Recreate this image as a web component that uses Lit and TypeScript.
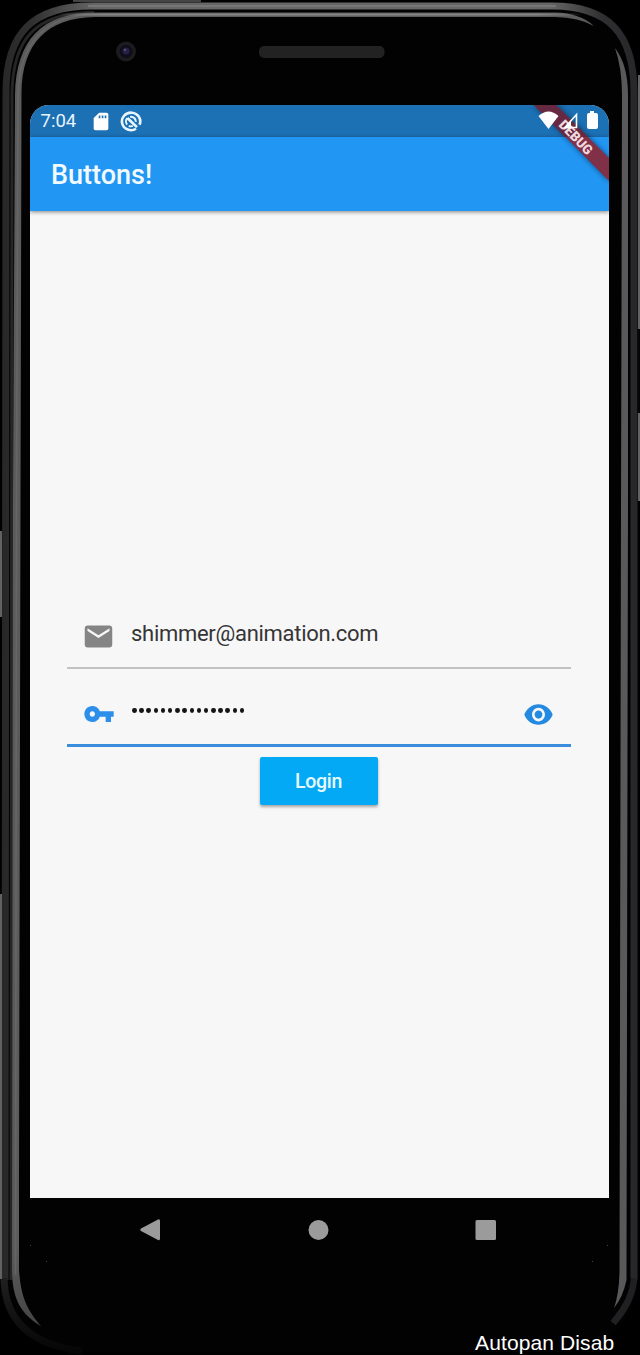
import { LitElement, html, css, svg } from "lit";
import { customElement, property, state } from "lit/decorators.js";

@customElement("phone-bezel")
class PhoneBezel extends LitElement {
  static styles = css`
    :host { display: block; }
    svg { display: block; }
  `;
  render() {
    const outer = "M2 1280 V92 C2 30 30 2 92 2 H552 C612 2 638 30 638 92 V1280 C636 1318 608 1350 568 1352 H80 C34 1350 0 1318 0 1280Z";
    return html`<svg width="640" height="1355" viewBox="0 0 640 1355" aria-hidden="true">
      <defs>
        <linearGradient id="rim" x1="0" x2="640" y1="0" y2="0" gradientUnits="userSpaceOnUse">
          <stop offset="0" stop-color="#272727"/><stop offset=".05" stop-color="#303030"/><stop offset=".15" stop-color="#666"/>
          <stop offset=".86" stop-color="#666"/><stop offset=".94" stop-color="#303032"/><stop offset="1" stop-color="#262628"/>
        </linearGradient>
        <linearGradient id="shine" x1="0" x2="640" y1="0" y2="0" gradientUnits="userSpaceOnUse">
          <stop offset="0" stop-color="#888" stop-opacity="0"/><stop offset=".09" stop-color="#888" stop-opacity="0"/><stop offset=".16" stop-color="#858585"/>
          <stop offset=".84" stop-color="#858585"/><stop offset=".91" stop-color="#888" stop-opacity="0"/>
        </linearGradient>
        <linearGradient id="fade" x1="0" x2="0" y1="1265" y2="1350" gradientUnits="userSpaceOnUse">
          <stop offset="0" stop-color="#242424"/><stop offset="1" stop-color="#060606"/>
        </linearGradient>
        <linearGradient id="tail" x1="0" x2="0" y1="1250" y2="1328" gradientUnits="userSpaceOnUse">
          <stop offset="0" stop-color="#5b5b5b"/><stop offset="1" stop-color="#444"/>
        </linearGradient>
      </defs>
      <rect width="640" height="1355" fill="#000"/>
      <rect x="73" y="0" width="128" height="2" fill="#444"/>
      <path d=${outer} fill="#020202"/>
      <path d="M5 1280 L6 92 C6 33 33 6 92 6 H552 C608 6 634 33 634 92 V1280" fill="none" stroke="url(#rim)" stroke-width="7"/>
      <path d="M88 6 H556" stroke="#7c7c7c" stroke-width="1.6"/>
      <path d="M4 1278 Q5 1342 82 1351" fill="none" stroke="url(#fade)" stroke-width="7"/>
      <path d="M634 1278 Q632 1302 613 1323" fill="none" stroke="#202022" stroke-width="7"/>
      <path d="M630.5 1278 Q629 1300 611 1318" fill="none" stroke="#050505" stroke-width="1"/>
      <path d="M11 1280 L12 93 C13 37 37 12.500 94 12.500" fill="none" stroke="#262626" stroke-width="3"/>
      <path d="M12 1270 L13 500 L15 95 C16 40 42 12.500 95 12.500 H555 Q580 13 594 26 Q579 17.500 555 17 H95 C47 18 22 43 21.500 93 L20.500 500 L19 1180 V1270 C21 1300 29 1312 41 1326 C22 1315 12 1300 12 1270Z" fill="url(#tail)"/>
      <path d="M15.500 1275 L16.500 500 L18 95 C19 43 45 14.500 96 14.500" fill="none" stroke="#666" stroke-width="1.600"/>
      <path d="M50 14.500 H582" stroke="url(#shine)" stroke-width="2"/>
      <path d="M615 48 Q628 65 628 95 V500 L626.500 1280 Q623 1297 614 1308 Q619 1294 619.500 1272 L621 500 L622 95 Q622 68 615 48Z" fill="#59595b"/>
      <g fill="#626263"><rect x="0" y="531" width="2" height="86"/><rect x="0" y="894" width="2" height="385"/><rect x="638" y="75" width="2" height="254"/><rect x="638" y="413" width="2" height="88"/></g>
      <rect x="637.500" y="329" width="2.500" height="84" fill="#050505"/>
      <circle cx="126" cy="51.500" r="10" fill="#1c1c1e"/><circle cx="126" cy="51.500" r="6.500" fill="#100d1b"/><circle cx="126" cy="51" r="3.500" fill="#272044"/><circle cx="125" cy="50" r="1.300" fill="#504a69"/>
      <rect x="259" y="46" width="125.500" height="12" rx="5" fill="#222"/>
      <g fill="#444"><rect x="30" y="1245" width="1" height="1"/><rect x="46" y="1261" width="1" height="1"/><rect x="607" y="1245" width="1" height="1"/><rect x="592" y="1261" width="1" height="1"/></g>
    </svg>`;
  }
}

const glyphs: Record<string, unknown> = {
  mail: svg`<path d="M20 4H4c-1.1 0-2 .9-2 2v12c0 1.1.9 2 2 2h16c1.1 0 2-.9 2-2V6c0-1.1-.9-2-2-2zm0 4l-8 5-8-5V6l8 5 8-5v2z"/>`,
  key: svg`<path d="M12.65 10C11.83 7.67 9.61 6 7 6c-3.31 0-6 2.69-6 6s2.69 6 6 6c2.61 0 4.83-1.67 5.65-4H17v4h4v-4h2v-4H12.65zM7 14c-1.1 0-2-.9-2-2s.9-2 2-2 2 .9 2 2-.9 2-2 2z"/>`,
  eye: svg`<path d="M12 4.5C7 4.5 2.73 7.61 1 12c1.73 4.39 6 7.5 11 7.5s9.27-3.11 11-7.5c-1.73-4.39-6-7.5-11-7.5zM12 17c-2.76 0-5-2.24-5-5s2.24-5 5-5 5 2.24 5 5-2.24 5-5 5zm0-8c-1.66 0-3 1.34-3 3s1.34 3 3 3 3-1.34 3-3-1.34-3-3-3z"/>`,
  sd: svg`<path fill-rule="evenodd" d="M18 2h-8L4 8v12c0 1.1.9 2 2 2h12c1.1 0 2-.9 2-2V4c0-1.1-.9-2-2-2zM9.500 5h1.800v3.400H9.500zm3.300 0h1.800v3.400h-1.800zm3.200 0h1.800v3.400H16z"/>`,
  sync: svg`<g fill="none" stroke="currentColor"><path d="M17.500 20.300A10 10 0 1 1 21.300 15.800" stroke-width="2.900"/><path d="M7.800 15.500A5.400 5.400 0 0 1 8 8.300M11 6.700A5.400 5.400 0 0 1 17.300 12.500M9.500 17A5.400 5.400 0 0 0 14 17.100" stroke-width="2.200"/><path d="M8 8l10.500 10.500" stroke-width="3"/></g>`,
};

@customElement("ui-icon")
class UiIcon extends LitElement {
  @property() name = "";
  static styles = css`
    :host { display: block; flex: none; }
    svg { display: block; width: 100%; height: 100%; fill: currentColor; }
  `;
  render() {
    return html`<svg viewBox="0 0 24 24" preserveAspectRatio="none" aria-hidden="true">${glyphs[this.name]}</svg>`;
  }
}

@customElement("app-root")
class AppRoot extends LitElement {
  @state() private reveal = false;

  static styles = css`
    :host { display: block; position: relative; width: 640px; height: 1355px; overflow: hidden; background: #000; font-family: Roboto, sans-serif; }
    * { box-sizing: border-box; }
    .bezel { position: absolute; inset: 0; }
    .device { position: relative; height: 100%; padding: 105px 31px 0 30px; display: flex; flex-direction: column; }
    .screen { position: relative; height: 1093px; flex: none; display: flex; flex-direction: column; overflow: hidden; border-radius: 19px 19px 0 0; background: #f7f7f7; }
    .status { height: 32px; flex: none; display: flex; align-items: center; padding: 0 10.5px; background: #1c70b4; color: #fff; font-size: 18.5px; }
    .time { width: 49px; color: #e7f5ff; }
    .sd { width: 22px; height: 21px; }
    .sync { width: 22px; height: 21px; margin-left: 8px; color: #e8f6ff; }
    .bar { height: 74px; flex: none; display: flex; align-items: center; padding: 2px 21px 0; background: #2196f3; color: #f1faff; font-size: 27px; font-weight: 500; box-shadow: 0 1px 4px #0007; z-index: 1; }
    .form { padding: 388px 38px 0 37px; display: flex; flex-direction: column; align-items: center; }
    .field { width: 100%; display: flex; align-items: center; font-size: 22px; color: #353535; }
    .email { height: 70px; border-bottom: 2px solid #c2c2c2; }
    .password { height: 78px; border-bottom: 3px solid #398ddc; }
    .mail { width: 33px; height: 33px; margin: 7px 0 0 15px; color: #858585; }
    .address { margin-left: 16px; letter-spacing: -.29px; }
    .key { width: 32px; height: 32px; margin: 15px 0 0 16px; color: #2c8fea; }
    .secret { display: flex; flex: 1; gap: 2.7px; margin: 8px 0 0 17px; height: 10px; align-items: center; }
    .dot { width: 4.5px; height: 4.8px; border-radius: 50%; background: #151515; }
    .eye { width: 31px; height: 33px; margin: 16px 17px 0 0; color: #2489e0; }
    .login { width: 118px; height: 48px; margin-top: 10px; border: 0; border-radius: 2px; background: #03a9f4; color: #e8faff; font: 500 19.5px Roboto, sans-serif; letter-spacing: -.25px; box-shadow: 0 2px 3px #0005; padding: 0 1px 0 0; }
    .signals { position: absolute; right: 0; top: 0; z-index: 2; }
    .debug { font: 900 13.5px Roboto, sans-serif; fill: #efd9df; }
    .nav { height: 64px; display: flex; align-items: center; padding-left: 110px; }
    .nav svg { display: block; fill: #9b9b9b; }
    .caption { position: absolute; left: 475px; top: 1331px; font: 21px/24px "Liberation Sans", sans-serif; letter-spacing: .12px; color: #fff; white-space: nowrap; }
  `;

  render() {
    return html`
      <phone-bezel class="bezel"></phone-bezel>
      <div class="device">
        <main class="screen">
          <div class="status"><span class="time">7:04</span><ui-icon class="sd" name="sd"></ui-icon><ui-icon class="sync" name="sync"></ui-icon></div>
          <header class="bar">Buttons!</header>
          <section class="form">
            <div class="field email"><ui-icon class="mail" name="mail"></ui-icon><span class="address">shimmer@animation.com</span></div>
            <div class="field password"><ui-icon class="key" name="key"></ui-icon>
              <span class="secret">${Array.from({ length: 16 }, () => html`<i class="dot"></i>`)}</span>
              <ui-icon class="eye" name="eye" @click=${() => (this.reveal = !this.reveal)}></ui-icon>
            </div>
            <button class="login">Login</button>
          </section>
          <svg class="signals" width="90" height="90" viewBox="519 105 90 90">
            <defs><filter id="soft" x="-20%" y="-20%" width="140%" height="140%"><feGaussianBlur stdDeviation="2.5"/></filter></defs>
            <path d="M533 105H558L609 157V182Z" fill="#000" opacity=".4" filter="url(#soft)"/>
            <path d="M534 105H556L609 158V181Z" fill="#803047"/>
            <path d="M534 105H556L588 137H565Z" fill="#672842"/>
            <text class="debug" x="0" y="0" text-anchor="middle" textLength="42" lengthAdjust="spacingAndGlyphs" transform="translate(572.5 140.5) rotate(46)">DEBUG</text>
            <g fill="#fff"><path d="M538.5 116Q548.5 107 558.5 116L548.5 129Z"/><path d="M590 111h4v2h2q2 0 2 2v12q0 2-2 2h-7q-2 0-2-2v-12q0-2 2-2h1z"/></g>
            <path d="M576.5 114.500V127.500H565Z" fill="none" stroke="#fff" stroke-width="1.600"/><path d="M563.500 128.300L571 120V128.300Z" fill="#fff"/>
          </svg>
        </main>
        <nav class="nav"><svg width="360" height="22" viewBox="140 1219 360 22"><path d="M141 1228.5L158 1219.5Q160 1218.5 160 1221V1238.5Q160 1241 158 1240L141 1231Q139.500 1230 141 1228.500Z"/><circle cx="318.500" cy="1230" r="10"/><rect x="475.500" y="1220" width="20.500" height="20" rx="1.500"/></svg></nav>
      </div>
      <span class="caption">Autopan Disab</span>
    `;
  }
}
